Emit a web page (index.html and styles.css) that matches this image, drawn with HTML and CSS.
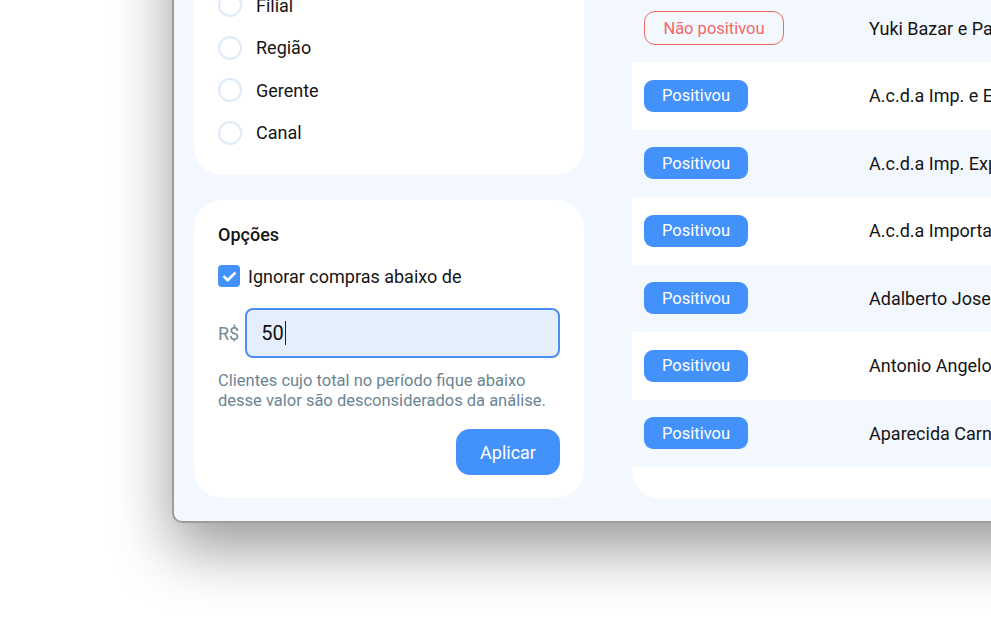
FILE: index.html
```html
<!DOCTYPE html>
<html lang="pt-BR">
<head>
  <meta charset="UTF-8">
  <meta name="viewport" content="width=device-width, initial-scale=1.0">
  <title>Positivação de clientes</title>
  <link rel="stylesheet" href="styles.css">
</head>
<body>
  <div class="window">
    <div class="sidebar">
      <div class="card group-card">
        <div class="card-title">Agrupar por</div>
        <div class="radio-list">
          <label class="radio-item"><span class="radio"></span>Vendedor</label>
          <label class="radio-item"><span class="radio"></span>Filial</label>
          <label class="radio-item"><span class="radio"></span>Região</label>
          <label class="radio-item"><span class="radio"></span>Gerente</label>
          <label class="radio-item"><span class="radio"></span>Canal</label>
        </div>
      </div>

      <div class="card options-card">
        <div class="card-title">Opções</div>
        <label class="check-item">
          <span class="checkbox">
            <svg viewBox="0 0 24 24" width="19" height="19"><path d="M5.5 12.5l4.2 4.2L18.5 8" fill="none" stroke="#fff" stroke-width="3.4" stroke-linecap="round" stroke-linejoin="round"/></svg>
          </span>
          Ignorar compras abaixo de
        </label>
        <div class="money-row">
          <span class="currency">R$</span>
          <div class="money-field">50<span class="caret"></span></div>
        </div>
        <p class="hint">Clientes cujo total no período fique abaixo desse valor são desconsiderados da análise.</p>
        <div class="actions">
          <button class="btn-primary">Aplicar</button>
        </div>
      </div>
    </div>

    <div class="table-card">
      <div class="row"><span class="badge badge-yes">Positivou</span><span class="name">A.c.a Comércio Ltda</span></div>
      <div class="row"><span class="badge badge-no">Não positivou</span><span class="name">Yuki Bazar e Papelaria Ltda</span></div>
      <div class="row"><span class="badge badge-yes">Positivou</span><span class="name">A.c.d.a Imp. e Exp. Ltda</span></div>
      <div class="row"><span class="badge badge-yes">Positivou</span><span class="name">A.c.d.a Imp. Exp. e Com. Ltda</span></div>
      <div class="row"><span class="badge badge-yes">Positivou</span><span class="name">A.c.d.a Importadora Ltda</span></div>
      <div class="row"><span class="badge badge-yes">Positivou</span><span class="name">Adalberto Jose da Silva</span></div>
      <div class="row"><span class="badge badge-yes">Positivou</span><span class="name">Antonio Angelo Ferreira</span></div>
      <div class="row"><span class="badge badge-yes">Positivou</span><span class="name">Aparecida Carneiro Santos</span></div>
    </div>
  </div>
</body>
</html>
```

FILE: styles.css
```css
:root {
  --blue: #4392fb;
  --bg: #f3f7fe;
  --text: #151515;
  --muted: #6a8594;
  --red: #f46767;
}

* {
  box-sizing: border-box;
}

body {
  margin: 0;
  height: 630px;
  overflow: hidden;
  background: #fff;
  font-family: Roboto, "Noto Sans", sans-serif;
  color: var(--text);
}

.window {
  margin: -177px 0 0 172px;
  width: 900px;
  height: 700px;
  background: var(--bg);
  border: 0 solid #9c9c9c;
  border-width: 0 0 2px 2px;
  border-radius: 0 0 0 10px;
  box-shadow: 0 26px 60px rgba(0, 0, 0, 0.4);
  display: grid;
  grid-template-columns: 390px 1fr;
  column-gap: 48px;
  align-items: end;
  padding: 0 0 23px 20px;
}

.sidebar {
  display: flex;
  flex-direction: column;
  gap: 25px;
}

.card {
  background: #fff;
  border-radius: 28px;
  padding: 24px 24px 23px;
}

.card-title {
  font-size: 18px;
  font-weight: 500;
  line-height: 22px;
}

.group-card {
  padding-bottom: 21px;
}

.radio-list {
  display: flex;
  flex-direction: column;
  margin-top: 8px;
}

.radio-item {
  height: 42.5px;
  display: flex;
  align-items: center;
  gap: 14px;
  font-size: 18px;
}

.radio {
  width: 24px;
  height: 24px;
  border-radius: 50%;
  border: 2px solid #dfeaf8;
}

.check-item {
  display: flex;
  align-items: center;
  gap: 8px;
  font-size: 18px;
  margin-top: 19px;
  height: 22px;
}

.checkbox {
  width: 22px;
  height: 22px;
  border-radius: 4px;
  background: var(--blue);
  display: flex;
  align-items: center;
  justify-content: center;
}

.money-row {
  display: flex;
  align-items: center;
  gap: 6px;
  margin-top: 21px;
}

.currency {
  font-size: 18px;
  color: #718b99;
}

.money-field {
  flex: 1;
  height: 50px;
  background: #e4eefc;
  border: 2.5px solid #4b8ff0;
  border-radius: 8px;
  padding: 0 14px;
  display: flex;
  align-items: center;
  font-size: 20px;
  color: #111;
}

.caret {
  width: 1.5px;
  height: 24px;
  background: #222;
  margin-left: 1px;
}

.hint {
  margin: 13px 0 0;
  font-size: 16.5px;
  line-height: 20px;
  color: var(--muted);
}

.actions {
  display: flex;
  justify-content: flex-end;
  margin-top: 18px;
}

.btn-primary {
  width: 104px;
  height: 46px;
  border: none;
  border-radius: 14px;
  background: var(--blue);
  color: #fff;
  font-family: inherit;
  font-size: 18px;
}

.table-card {
  background: #fff;
  border-radius: 28px 0 0 28px;
  overflow: hidden;
  padding-bottom: 32px;
  margin-bottom: -1px;
}

.row {
  height: 67.5px;
  display: flex;
  align-items: center;
  padding-left: 12px;
  white-space: nowrap;
}

.row:nth-child(even) {
  background: var(--bg);
}

.badge {
  display: inline-flex;
  flex: none;
  height: 32px;
  align-items: center;
  justify-content: center;
  font-size: 16.5px;
  border-radius: 9px;
}

.badge-yes {
  width: 104px;
  background: var(--blue);
  color: #fff;
}

.badge-no {
  width: 140px;
  height: 34px;
  border: 1.5px solid var(--red);
  border-radius: 11px;
  color: var(--red);
}

.name {
  font-size: 18px;
}

.badge-yes + .name {
  margin-left: 121px;
}

.badge-no + .name {
  margin-left: 85px;
}
```
